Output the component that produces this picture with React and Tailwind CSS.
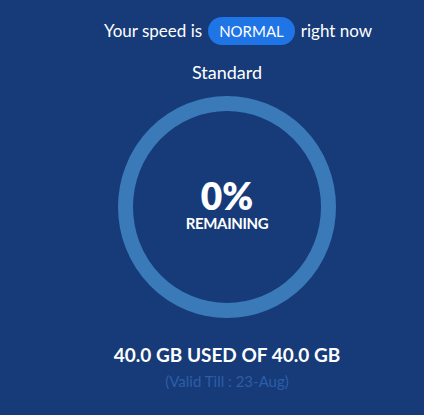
import React from "react"

function Ring({ percent }) {
  const size = 224
  const stroke = 15
  const r = (size - stroke) / 2
  return (
    <div className="relative w-[224px] h-[228px] flex items-center justify-center">
      <svg className="absolute inset-0" width="224" height="228" viewBox="0 0 224 228" preserveAspectRatio="none">
        <ellipse cx="112" cy="114" rx={r - 3} ry={r - 1} fill="none" stroke="#3a7ab8" strokeWidth={stroke} />
      </svg>
      <div className="relative flex flex-col items-center text-white -mt-[4px]">
        <span className="text-[37px] font-extrabold leading-[36px]">{percent}%</span>
        <span className="text-[15px] font-bold leading-[18px] tracking-tight">REMAINING</span>
      </div>
    </div>
  )
}

export default function App() {
  return (
    <div
      className="w-[424px] h-[415px] bg-[#163b78] overflow-hidden flex flex-col items-center pl-[30px]"
      style={{ fontFamily: "Lato, 'Open Sans', sans-serif" }}
    >
      <div className="mt-[17px] ml-[22px] flex items-center gap-[6px] text-white text-[17px] leading-[28px] whitespace-nowrap">
        <span>Your speed is</span>
        <span className="h-[28px] px-[11px] rounded-full bg-[#1f74e6] text-[15px] flex items-center">NORMAL</span>
        <span>right now</span>
      </div>
      <div className="mt-[16px] text-white text-[18px] leading-[22px]">Standard</div>
      <div className="mt-[10px]">
        <Ring percent={0} />
      </div>
      <div className="mt-[21px] text-white text-[19px] font-bold leading-[26px] whitespace-nowrap">
        40.0 GB USED OF 40.0 GB
      </div>
      <div className="mt-[3px] text-[#2c5ea8] text-[15px] leading-[20px]">(Valid Till : 23-Aug)</div>
    </div>
  )
}
